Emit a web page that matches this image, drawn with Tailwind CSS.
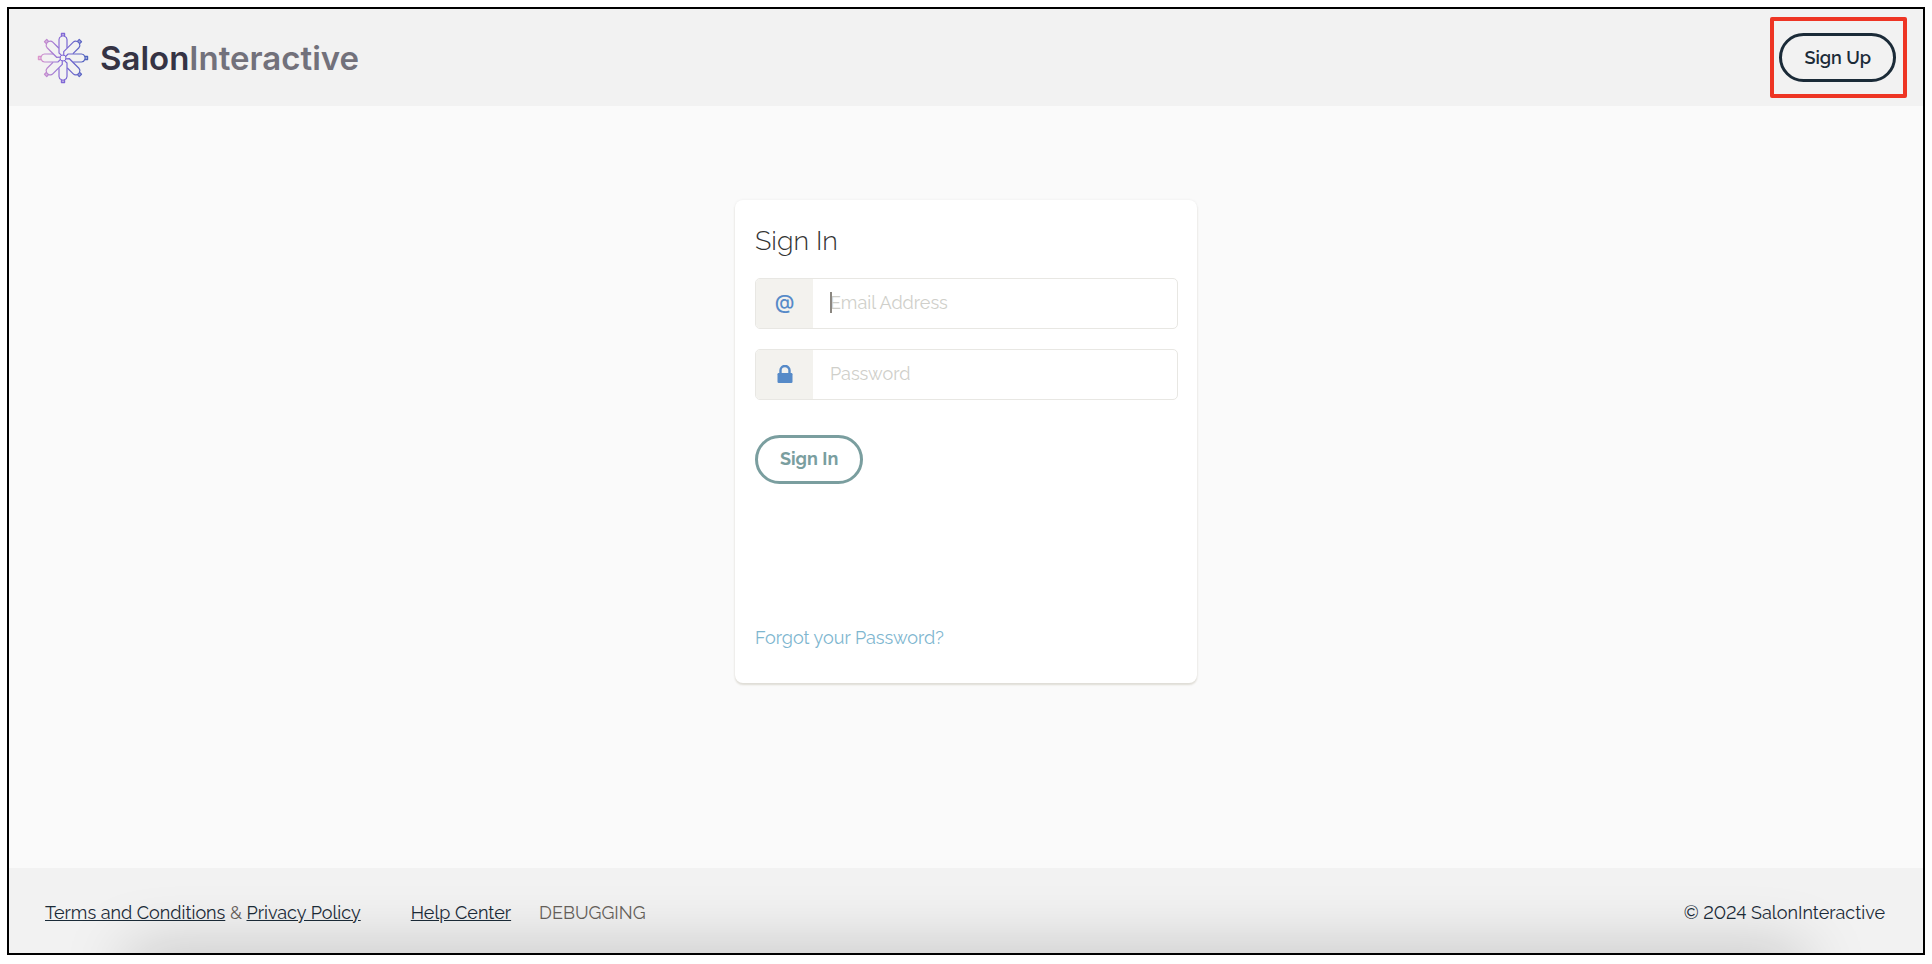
<!DOCTYPE html>
<html lang="en">
<head>
  <meta charset="UTF-8" />
  <meta name="viewport" content="width=device-width, initial-scale=1.0" />
  <title>Sign In | SalonInteractive</title>
  <script src="https://cdn.jsdelivr.net/npm/@tailwindcss/browser@4"></script>
</head>
<body class="min-h-screen flex bg-white px-[7px] pt-[7px] pb-[9px] font-[Raleway,Lato,sans-serif] text-lg text-[#1b2b38]">

  <div class="relative flex-1 flex flex-col overflow-hidden border-2 border-black bg-[#fafafa]">

    <!-- Header -->
    <header class="flex items-center justify-between bg-[#f2f2f2] pl-7 pr-4 py-2">
      <a href="#" class="flex items-center gap-[11px]">
        <svg class="size-[52px]" viewBox="0 0 52 52" aria-hidden="true">
          <defs>
            <linearGradient id="petal-colors" x1="0" y1="0" x2="1" y2="0">
              <stop offset="0" stop-color="#e29acb" />
              <stop offset="0.5" stop-color="#8067d6" />
              <stop offset="1" stop-color="#4a63bb" />
            </linearGradient>
            <g id="petal" fill="none" stroke="#fff" stroke-width="1.2" stroke-linecap="round">
              <path d="M-1.5 -2.6 L-4 -5 V-18.5 A4 3.6 0 0 1 -1.5 -21.8 M1.5 -21.8 A4 3.6 0 0 1 4 -18.5 V-10.5" />
              <path d="M-1.6 -22 V-24.6 H1.6 V-22 Z" fill="#888" stroke-linejoin="round" />
            </g>
            <mask id="flower" maskUnits="userSpaceOnUse" x="0" y="0" width="52" height="52">
              <g transform="translate(26 26)">
                <use href="#petal" />
                <use href="#petal" transform="rotate(45)" />
                <use href="#petal" transform="rotate(90)" />
                <use href="#petal" transform="rotate(135)" />
                <use href="#petal" transform="rotate(180)" />
                <use href="#petal" transform="rotate(225)" />
                <use href="#petal" transform="rotate(270)" />
                <use href="#petal" transform="rotate(315)" />
                <circle r="3" fill="none" stroke="#fff" stroke-width="1" />
              </g>
            </mask>
          </defs>
          <rect width="52" height="52" fill="url(#petal-colors)" mask="url(#flower)" />
        </svg>
        <span class="font-[Inter,sans-serif] text-[33px] leading-10 font-semibold text-[#353344]">Salon<span class="text-[#72717b]">Interactive</span></span>
      </a>
      <div class="rounded-xs border-4 border-[#ee3524] py-3 pl-[5px] pr-[7px]">
        <button type="button" class="h-[49px] rounded-full border-3 border-[#1b2b38] px-[22px] font-semibold">Sign Up</button>
      </div>
    </header>

    <!-- Sign in card -->
    <main class="flex-1 px-4 pt-[94px] pb-10">
      <form class="mx-auto flex w-full max-w-[462px] min-h-[483px] flex-col items-start rounded-lg bg-white pl-5 pr-[19px] pt-[23px] pb-[31px] shadow-[0_2px_2px_#dfddd6,0_0_3px_#00000010]">
        <h1 class="text-[27px] leading-9 font-light text-[#333]">Sign In</h1>

        <div class="mt-[19px] flex h-[51px] w-full overflow-hidden rounded-[5px] border border-[#e8e7e3]">
          <label for="email" aria-label="Email Address" class="flex w-[57px] items-center justify-center bg-[#f3f2ee] pb-1 font-[Inter,sans-serif] text-xl font-medium text-[#568ac8]">@</label>
          <div class="relative flex-1">
            <span class="absolute left-[17px] top-[13px] h-[21px] w-0.5 bg-[#8b8781]"></span>
            <input id="email" name="email" type="email" placeholder="Email Address" class="size-full px-[17px] pb-0.5 outline-none placeholder:text-[#cfcfca]" />
          </div>
        </div>

        <div class="mt-5 flex h-[51px] w-full overflow-hidden rounded-[5px] border border-[#e8e7e3]">
          <label for="password" aria-label="Password" class="flex w-[57px] items-center justify-center bg-[#f3f2ee] pb-0.5 text-[#568ac8]">
            <svg class="h-[18px] w-4" viewBox="0 0 16 18" aria-hidden="true">
              <path d="M3.5 9V5.3a4.5 4.3 0 0 1 9 0V9" fill="none" stroke="currentColor" stroke-width="2.4" />
              <rect x="0.5" y="8" width="15" height="10" rx="1.2" fill="currentColor" />
            </svg>
          </label>
          <input id="password" name="password" type="password" placeholder="Password" class="flex-1 px-[17px] pb-0.5 outline-none placeholder:text-[#cfcfca]" />
        </div>

        <button type="submit" class="mt-[35px] h-[49px] rounded-full border-3 border-[#7a9e9f] px-[22px] pb-0.5 font-bold text-[#7a9e9f]">Sign In</button>

        <a href="#" class="mt-auto text-[#7eb6cf]">Forgot your Password?</a>
      </form>
    </main>

    <!-- Footer -->
    <footer class="flex items-center justify-between bg-[#f2f2f2] pl-9 pr-[38px] pt-[31px] pb-[26px]">
      <div class="flex">
        <p class="text-[#66615b]">
          <a href="#" class="text-[#1b2b38] underline">Terms and Conditions</a> &amp;
          <a href="#" class="text-[#1b2b38] underline">Privacy Policy</a>
        </p>
        <a href="#" class="ml-[50px] underline">Help Center</a>
        <span class="ml-7 text-[#66615b]">DEBUGGING</span>
      </div>
      <p class="lining-nums">© 2024 SalonInteractive</p>
    </footer>

    <!-- Shade rising from the bottom edge -->
    <div class="pointer-events-none absolute inset-x-[120px] top-full h-10 shadow-[0_0_64px_#00000040]"></div>
  </div>

</body>
</html>
